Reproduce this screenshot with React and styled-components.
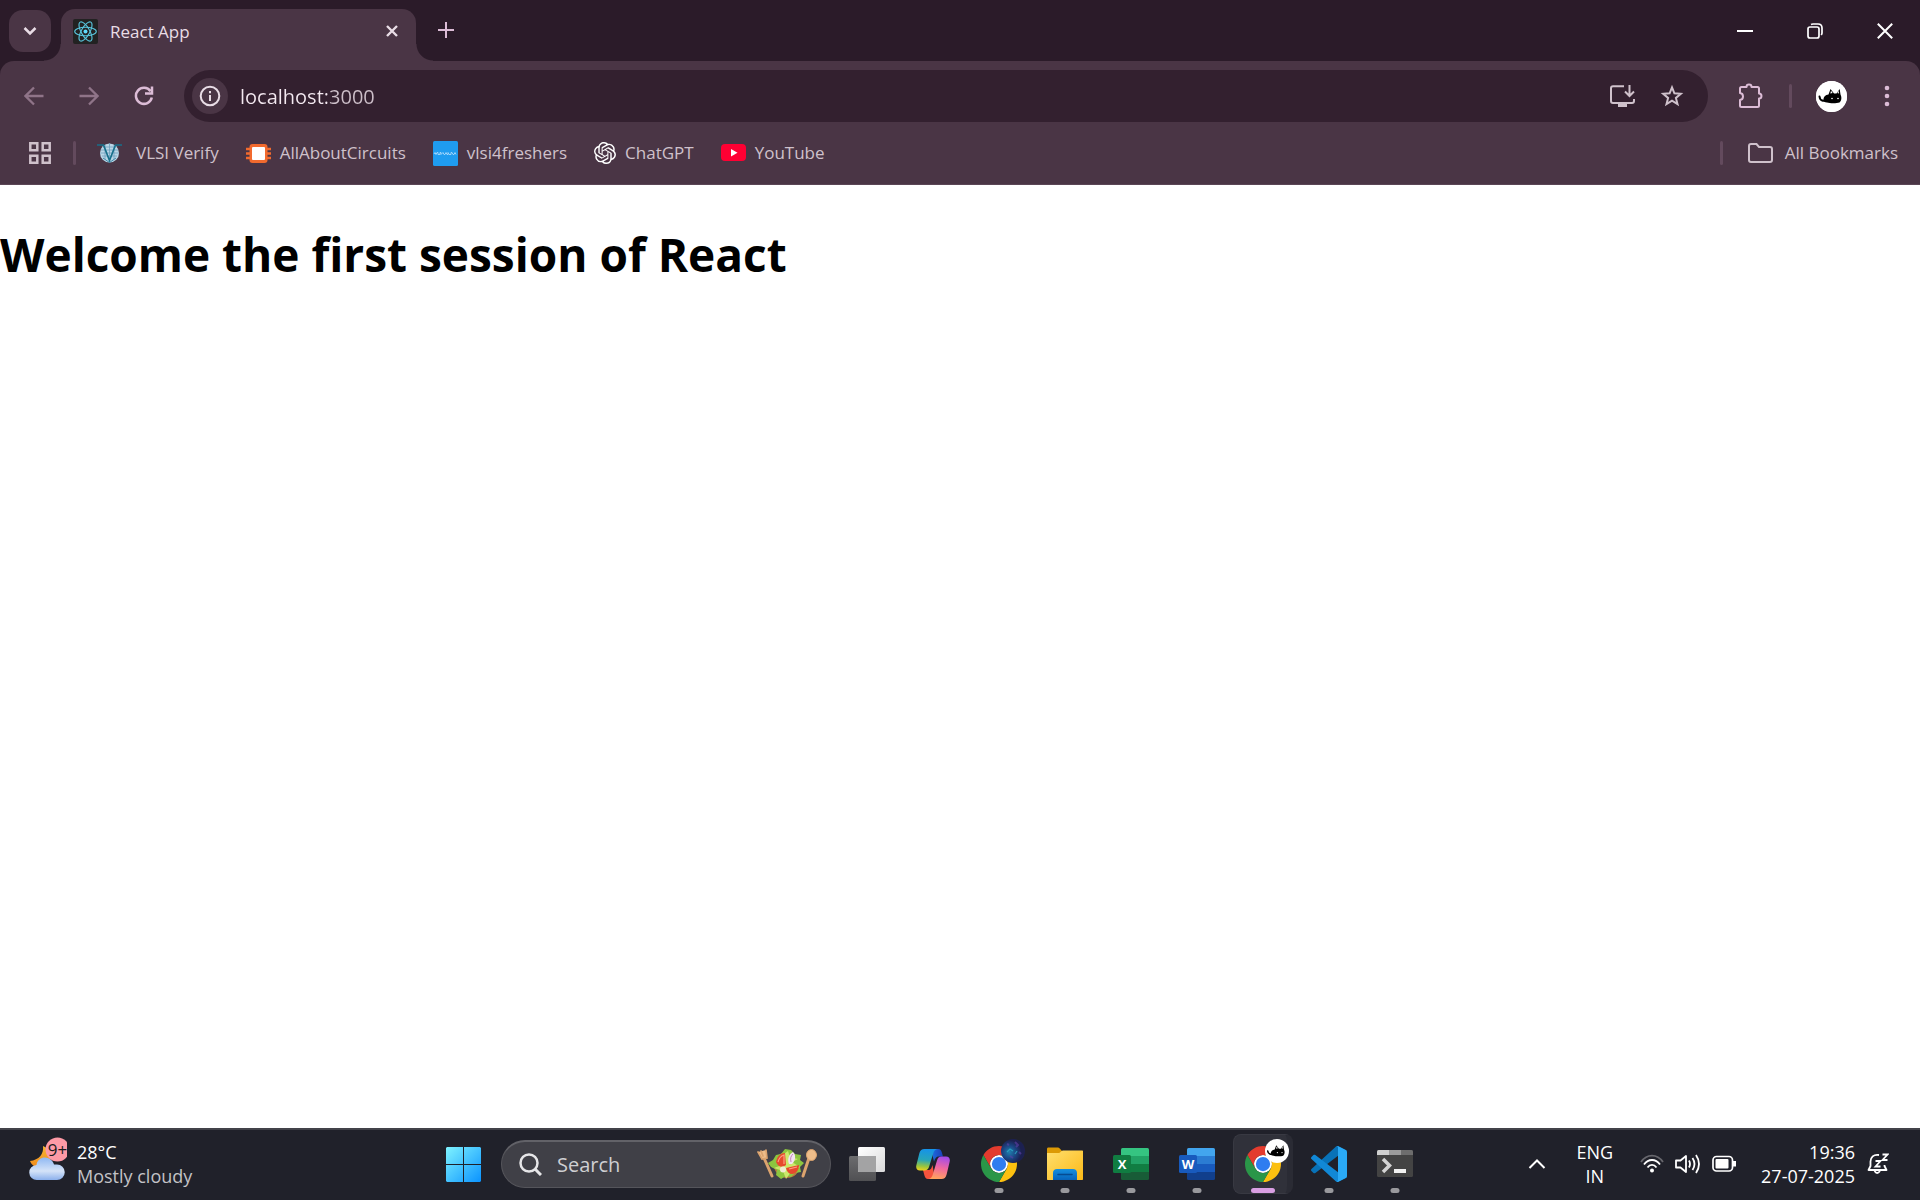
import React, { useState } from "react";
import styled, { createGlobalStyle } from "styled-components";
import { SiOpenai } from "react-icons/si";

const color = {
  strip: "#2b1b29",
  toolbar: "#4a3545",
  field: "#33202f",
  accent: "#dcbcd6",
  text: "#e9dde6",
  muted: "#cfc1cb",
  divider: "#634a5d",
  taskbar: "#20212a",
};

const GlobalStyle = createGlobalStyle`
  *, *::before, *::after { box-sizing: border-box; }
  html, body, #root { height: 100%; }
  body {
    margin: 0;
    background: #fff;
    font-family: "Open Sans", "Noto Sans", sans-serif;
    overflow: hidden;
  }
  button, input { font: inherit; }
  svg { display: block; flex: none; }
`;

const Screen = styled.div`
  display: flex;
  flex-direction: column;
  height: 100%;
  min-height: 0;
`;

/* ---------- tab strip ---------- */

const TabStrip = styled.header`
  display: flex;
  align-items: flex-end;
  height: 61px;
  padding-left: 9px;
  background: ${color.strip};
`;

const PlainButton = styled.button`
  display: flex;
  align-items: center;
  justify-content: center;
  flex: none;
  padding: 0;
  border: 0;
  background: transparent;
  color: ${(p) => p.$tone || color.text};
`;

const TabSearch = styled(PlainButton)`
  width: 42px;
  height: 42px;
  margin: 0 10px 9px 0;
  border-radius: 14px;
  background: ${color.toolbar};
`;

const Tab = styled.div`
  position: relative;
  display: flex;
  align-items: center;
  width: 355px;
  height: 52px;
  padding: 0 12px 8px;
  border-radius: 14px 14px 0 0;
  background: ${color.toolbar};
  color: ${color.text};
  font-size: 17px;
  line-height: 24px;

  &::before, &::after {
    content: "";
    position: absolute;
    bottom: 0;
    width: 17px;
    height: 17px;
  }
  &::before {
    right: 100%;
    background: radial-gradient(circle at 0 0, transparent 16px, ${color.toolbar} 17px);
  }
  &::after {
    left: 100%;
    background: radial-gradient(circle at 100% 0, transparent 16px, ${color.toolbar} 17px);
  }
`;

const TabTitle = styled.span`
  flex: 1;
  margin: 2px 0 0 12px;
`;

const TabClose = styled(PlainButton)`
  width: 24px;
  height: 24px;
`;

const NewTab = styled(PlainButton)`
  width: 42px;
  height: 42px;
  margin: 0 auto 10px 9px;
`;

const WindowButton = styled(PlainButton)`
  width: 70px;
  height: 61px;
`;

/* ---------- toolbar ---------- */

const ToolbarArea = styled.div`
  background: ${color.strip};
`;

const ToolbarShell = styled.div`
  border-radius: 14px 14px 0 0;
  border-bottom: 1px solid #5b4656;
  background: ${color.toolbar};
`;

const Toolbar = styled.div`
  display: flex;
  align-items: center;
  height: 70px;
  padding: 0 18px 0 6px;
`;

const NavButton = styled(PlainButton)`
  width: 55px;
  height: 44px;
`;

const AddressBar = styled.div`
  display: flex;
  align-items: center;
  flex: 1;
  height: 52px;
  margin: 0 15px 0 13px;
  padding: 0 12px 0 8px;
  border-radius: 26px;
  background: ${color.field};
`;

const SiteInfo = styled(PlainButton)`
  width: 36px;
  height: 36px;
  border-radius: 50%;
  background: ${color.toolbar};
`;

const UrlInput = styled.input`
  flex: 1;
  min-width: 0;
  height: 36px;
  margin-left: 12px;
  padding: 0;
  border: 0;
  outline: 0;
  background: linear-gradient(90deg, #f4e9f1 87px, #cdbfc9 87px);
  background-clip: text;
  color: transparent;
  caret-color: #fff;
  font-size: 20px;
`;

const FieldButton = styled(PlainButton)`
  width: 49px;
  height: 40px;
`;

const Divider = styled.span`
  flex: none;
  width: 3px;
  height: 24px;
  border-radius: 2px;
  background: ${color.divider};
`;

const ToolbarDivider = styled(Divider)`
  margin-left: 11px;
`;

const ProfileButton = styled(PlainButton)`
  width: 31px;
  height: 31px;
  margin: 0 24px;
  border-radius: 50%;
  background: #fff;
`;

const MenuButton = styled(PlainButton)`
  width: 31px;
  height: 40px;
`;

/* ---------- bookmarks ---------- */

const BookmarksBar = styled.nav`
  display: flex;
  align-items: center;
  height: 53px;
  padding: 0 22px 9px 29px;
  color: ${color.muted};
  font-size: 17px;
  line-height: 24px;
`;

const AppsButton = styled(PlainButton)`
  width: 22px;
  height: 24px;
  margin-right: 22px;
`;

const BookmarkList = styled.ul`
  display: flex;
  align-items: center;
  gap: 27px;
  flex: 1;
  margin: 0 0 0 21px;
  padding: 0;
  list-style: none;
`;

const Bookmark = styled.a`
  display: flex;
  align-items: center;
  gap: ${(p) => p.$gap || 9}px;
  color: inherit;
  text-decoration: none;
  white-space: nowrap;
`;

const AllBookmarks = styled(PlainButton)`
  gap: 12px;
  margin-left: 25px;
`;

/* ---------- page ---------- */

const Page = styled.main`
  flex: 1;
  min-height: 0;
  background: #fff;
`;

const Heading = styled.h1`
  margin: 36px 0;
  color: #000;
  font-size: 46px;
  font-weight: 700;
  line-height: 66px;
`;

/* ---------- taskbar ---------- */

const Taskbar = styled.footer`
  display: grid;
  grid-template-columns: minmax(0, 430fr) auto minmax(0, 492fr);
  align-items: stretch;
  height: 72px;
  padding-bottom: 2px;
  border-top: 2px solid #43434a;
  background: ${color.taskbar};
  color: #fff;
  font-size: 18px;
  line-height: 24px;
`;

const Weather = styled(PlainButton)`
  justify-content: flex-start;
  gap: 10px;
  padding-left: 28px;
  text-align: left;
`;

const Stack = styled.span`
  display: flex;
  flex-direction: column;
  align-items: ${(p) => p.$align || "flex-start"};
  white-space: nowrap;
`;

const Soft = styled.span`
  color: #c3c3c7;
`;

const Apps = styled.div`
  display: flex;
  align-items: center;
`;

const AppButton = styled(PlainButton)`
  position: relative;
  width: 66px;
  height: 68px;

  &::after {
    content: "";
    position: absolute;
    bottom: 5px;
    left: 50%;
    width: ${(p) => (p.$active ? 24 : 9)}px;
    height: 5px;
    border-radius: 3px;
    background: ${(p) => (p.$active ? "#d99fe3" : "#99999d")};
    transform: translateX(-50%);
    display: ${(p) => (p.$open ? "block" : "none")};
  }
`;

const ActivePlate = styled.span`
  display: flex;
  align-items: center;
  justify-content: center;
  width: 60px;
  height: 60px;
  padding-left: 5px;
  border: 1px solid #383942;
  border-right: 6px solid #2a2b34;
  border-radius: 8px;
  background: #30313a;
`;

const AppIcon = styled.span`
  position: relative;
  display: flex;
`;

const ProfileBadge = styled.span`
  position: absolute;
  top: -7px;
  right: -8px;
`;

const SearchBox = styled.label`
  display: flex;
  align-items: center;
  width: 330px;
  height: 48px;
  margin: 0 3px 0 5px;
  padding: 0 12px 0 17px;
  border: 1px solid #55555b;
  border-top: 2px solid #626268;
  border-radius: 24px;
  background: #404047;
`;

const SearchInput = styled.input`
  flex: 1;
  min-width: 0;
  margin-left: 15px;
  padding: 0;
  border: 0;
  outline: 0;
  background: transparent;
  color: #fff;
  font-size: 20px;
  line-height: 28px;
  &::placeholder { color: #cfcfd2; opacity: 1; }
`;

const Tray = styled.div`
  display: flex;
  align-items: center;
  justify-content: flex-end;
  padding-right: 31px;
`;

const TrayButton = styled(PlainButton)`
  height: 68px;
  gap: 11px;
  margin-left: ${(p) => p.$gap || 0}px;
`;

/* ---------- drawings ---------- */

const Line = ({ w = 24, h = w, sw = 2, children, ...rest }) => (
  <svg width={w} height={h} viewBox={`0 0 ${w} ${h}`} fill="none" stroke="currentColor" strokeWidth={sw} aria-hidden="true" {...rest}>
    {children}
  </svg>
);

const ReactFavicon = () => (
  <svg width="25" height="25" viewBox="0 0 25 25" aria-hidden="true">
    <rect width="25" height="25" rx="2" fill="#222" />
    <g fill="none" stroke="#58c4dc" strokeWidth="1.1">
      <ellipse cx="12.5" cy="12.5" rx="10.8" ry="4.2" />
      <ellipse cx="12.5" cy="12.5" rx="10.8" ry="4.2" transform="rotate(60 12.5 12.5)" />
      <ellipse cx="12.5" cy="12.5" rx="10.8" ry="4.2" transform="rotate(120 12.5 12.5)" />
    </g>
    <circle cx="12.5" cy="12.5" r="2" fill="#61dafb" />
  </svg>
);

const Cat = ({ size = 31 }) => (
  <svg width={size} height={size} viewBox="0 0 31 31" aria-hidden="true">
    <circle cx="15.5" cy="15.5" r="15.5" fill="#fff" />
    <path d="M3.500 15.500c.5 4.500 4 5 8 3" fill="none" stroke="#000" strokeWidth="2" strokeLinecap="round" />
    <path d="M7.500 19c0-3.500 2-5 5-5.500l2-5.500 3.500 4.500h2.500L23.700 8l.8 5.500c1.500 3 1 6.500-1 8-3 1-9.500 1-12.500 0C8.500 21.500 7.500 20.500 7.500 19z" fill="#000" />
    <path d="M14.300 12.500l.7-2.700 1.700 2.200zM22.900 12.500l-.1-2.700-1.500 2.200z" fill="#fff" />
    <circle cx="16" cy="17.500" r=".8" fill="#fff" />
    <circle cx="22" cy="17.500" r=".8" fill="#fff" />
  </svg>
);

const VlsiVerifyIcon = () => (
  <svg width="25" height="22" viewBox="0 0 25 22" aria-hidden="true">
    <circle cx="12.500" cy="11" r="9.500" fill="#b9d6e6" />
    <path d="M6 5h13M4 8h17M3.500 11h18M5 14h15M8 3v14M12.500 1v16M17 3v14" stroke="#6f9fbd" strokeWidth=".8" />
    <path d="M0 3h6.500l6 15.500L18.500 3H25" fill="none" stroke="#176f8b" strokeWidth="1.700" />
    <path d="M6 16l6.500 4.500L19 16" fill="none" stroke="#3f86a6" strokeWidth="1" />
  </svg>
);

const CircuitsIcon = () => (
  <svg width="25" height="19" viewBox="0 0 25 19" aria-hidden="true">
    <path d="M0 5h25M0 9.500h25M0 14h25" stroke="#f26a2e" strokeWidth="2.500" />
    <rect x="3.500" width="18" height="19" rx="3" fill="#f26a2e" />
    <rect x="6" y="3" width="13" height="13" rx="1" fill="#fff" />
  </svg>
);

const FreshersIcon = () => (
  <svg width="25" height="25" viewBox="0 0 25 25" aria-hidden="true">
    <rect width="25" height="25" rx="1.500" fill="#1f9cf0" />
    <path d="M1 13l1-1.500 1 2 1-2h1v2h2v-2h1v2l2-2 1 2h1l1-2 1 2h1v-2l1 2h2v-2h1l1 2h1l1-2 1 2" fill="none" stroke="#a8d8fa" strokeWidth=".9" />
  </svg>
);

const YouTubeIcon = () => (
  <svg width="25" height="18" viewBox="0 0 25 18" aria-hidden="true">
    <rect width="25" height="17" rx="4" fill="#ff0033" />
    <path d="M10 5v7.500l6.500-3.700z" fill="#fff" />
  </svg>
);

const WeatherIcon = () => (
  <svg width="39" height="54" viewBox="0 0 39 54" aria-hidden="true">
    <defs>
      <linearGradient id="moon" x1="0" y1="0" x2="0" y2="1">
        <stop offset="0" stopColor="#f7b731" />
        <stop offset="1" stopColor="#f08a1c" />
      </linearGradient>
      <linearGradient id="cloud" x1="0" y1="0" x2="0" y2="1">
        <stop offset="0" stopColor="#8fb8f2" />
        <stop offset=".6" stopColor="#d5e3f8" />
        <stop offset="1" stopColor="#8bb0ec" />
      </linearGradient>
    </defs>
    <path d="M15 9c1 8-4 14-13 15 3 8 14 9 19 2 4-6 1-14-6-17z" fill="url(#moon)" />
    <path d="M9 43a7.500 7.500 0 0 1-.5-15C9 23 13 20.500 17 20.500s8 3 9 7h3a7.700 7.700 0 0 1 0 15.500z" fill="url(#cloud)" />
    <circle cx="29.500" cy="12.500" r="12" fill="#fd9aa6" />
    <text x="29.500" y="18.500" textAnchor="middle" fontSize="17" fill="#1b1b1b" fontFamily="Open Sans, sans-serif">9+</text>
  </svg>
);

const StartIcon = () => (
  <svg width="35" height="35" viewBox="0 0 35 35" aria-hidden="true">
    <defs>
      <linearGradient id="start" x1="0" y1="0" x2="35" y2="35" gradientUnits="userSpaceOnUse">
        <stop offset="0" stopColor="#7ff3ff" />
        <stop offset="1" stopColor="#0a93ff" />
      </linearGradient>
    </defs>
    <path d="M1 0h16v17H0V1zM18 0h16l1 1v16H18zM0 18h17v17H1l-1-1zM18 18h17v16l-1 1H18z" fill="url(#start)" />
  </svg>
);

const SaladIcon = () => (
  <svg width="62" height="34" viewBox="0 0 62 34" aria-hidden="true">
    <g stroke="#dba36e" strokeLinecap="round" fill="#eebd8a">
      <path d="M8 10l8 18" strokeWidth="3" />
      <path d="M53 10l-6 18" strokeWidth="3" />
      <path d="M2 4l4 7 5-1-1-8M5 3l2 5" strokeWidth="1.700" />
      <ellipse cx="55.500" cy="7" rx="5" ry="5.500" strokeWidth="1" />
    </g>
    <circle cx="31" cy="17" r="13" fill="#b9763f" />
    <path d="M20 7l5-1 4-5 6 1 4 4 6 1-1 5 4 3-4 4 1 5-6 1-4 4-5-1-5 3-5-4 1-5-6-3-3-4 5-3z" fill="#8dc63f" />
    <path d="M25 8l7-5 2 6 8 2-6 3 8 5-9 5-5 7-3-8-9-3 8-3z" fill="#cbe86b" />
    <path d="M20 14c1-6 5-9 9-9l1 12c-4 3-8 2-10-3z" fill="#e6492d" />
    <path d="M30 20l13-3c0 5-3 9-7 9-3 0-5-2-6-6z" fill="#e6492d" />
    <path d="M22 14c1-4 3-6 6-7v9M33 21l8-2" fill="none" stroke="#ff9d7f" strokeWidth="1.200" />
    <path d="M33 16c-2-5 0-10 4-12 3 3 3 8-1 12z" fill="#f3e4f1" />
    <path d="M35 14c-1-4 0-6 2-8" fill="none" stroke="#b56aa8" strokeWidth=".8" />
    <circle cx="27" cy="21.500" r="3" fill="#f2ead2" />
  </svg>
);

const TaskViewIcon = () => (
  <svg width="36" height="34" viewBox="0 0 36 34" aria-hidden="true">
    <defs>
      <linearGradient id="tvFront" x1="0" y1="0" x2="1" y2="1">
        <stop offset="0" stopColor="#fff" />
        <stop offset="1" stopColor="#d9d9da" />
      </linearGradient>
      <linearGradient id="tvBack" x1="0" y1="0" x2="0" y2="1">
        <stop offset="0" stopColor="#6c6c6e" />
        <stop offset="1" stopColor="#505053" />
      </linearGradient>
    </defs>
    <rect x="0" y="9" width="27" height="25" rx="1.500" fill="url(#tvBack)" />
    <rect x="9" y="0" width="27" height="25" rx="1.500" fill="url(#tvFront)" />
    <path d="M9 9h18v16H10.500A1.500 1.500 0 0 1 9 23.500z" fill="#a3a3a4" />
  </svg>
);

const CopilotIcon = () => (
  <svg width="34" height="32" viewBox="0 0 34 32" aria-hidden="true">
    <defs>
      <linearGradient id="cpA" x1=".3" y1="0" x2=".2" y2="1">
        <stop offset="0" stopColor="#1693e8" />
        <stop offset=".5" stopColor="#28a6b8" />
        <stop offset=".8" stopColor="#9bc53d" />
        <stop offset="1" stopColor="#f2d21c" />
      </linearGradient>
      <linearGradient id="cpB" x1=".6" y1="0" x2=".4" y2="1">
        <stop offset="0" stopColor="#a44be8" />
        <stop offset=".5" stopColor="#f0689f" />
        <stop offset="1" stopColor="#ffa45c" />
      </linearGradient>
      <linearGradient id="cpC" x1="0" y1="0" x2="1" y2="0">
        <stop offset="0" stopColor="#1b6fe0" />
        <stop offset="1" stopColor="#1d3fb8" />
      </linearGradient>
    </defs>
    <path d="M15 1h7c2.500 0 3.300 1.500 4 4l1 3.500h-4c-3 0-4 2-5 5z" fill="url(#cpC)" />
    <path d="M19 31h-7c-2 0-3-1.500-3.700-4L7 22h5c3 0 3.500-2 4.500-5z" fill="#f5533d" />
    <path d="M8.500 1h13c-2.500.3-3.500 2-4.300 4.500L13 19c-.8 2.300-2 3.500-4.500 3.500H4C.8 22.500-.4 20 .4 17l3-12C4.200 2.300 5.700 1 8.500 1z" fill="url(#cpA)" />
    <path d="M25.500 31h-13c2.500-.3 3.500-2 4.300-4.500L21 12.500c.8-2.500 2-4 4.500-4H30c3.200 0 4.400 2.500 3.600 5.500l-3 12.500c-.8 3-2.300 4.500-5.100 4.500z" fill="url(#cpB)" />
  </svg>
);

const ChromeIcon = () => (
  <svg width="36" height="36" viewBox="0 0 48 48" aria-hidden="true">
    <circle cx="24" cy="24" r="12" fill="#fff" />
    <path d="M24 12H44.780a24 24 0 0 0-41.560 0L13.610 30A12 12 0 0 1 24 12Z" fill="#e33b2e" />
    <path d="M34.390 30 24 48A24 24 0 0 0 44.780 12H24A12 12 0 0 1 34.390 30Z" fill="#fcc010" />
    <path d="M13.610 30 3.220 12A24 24 0 0 0 24 48L34.390 30A12 12 0 0 1 13.610 30Z" fill="#2a9648" />
    <circle cx="24" cy="24" r="9.500" fill="#2f7df0" />
  </svg>
);

const GalaxyBadge = () => (
  <svg width="24" height="24" viewBox="0 0 24 24" aria-hidden="true">
    <defs>
      <radialGradient id="galaxy" cx=".35" cy=".55">
        <stop offset="0" stopColor="#1f7fae" />
        <stop offset=".55" stopColor="#1b4583" />
        <stop offset="1" stopColor="#1c2050" />
      </radialGradient>
    </defs>
    <circle cx="12" cy="12" r="12" fill="url(#galaxy)" />
    <path d="M14 3l3 3-2 2M18 13l2 2M6 5l2 1M9 17l3 2" stroke="#5f3fa8" strokeWidth="2" fill="none" opacity=".6" />
    <path d="M6 13l3-3 3 2M14 15l2-3" stroke="#2fb0cc" strokeWidth="1.300" fill="none" opacity=".7" />
  </svg>
);

const ExplorerIcon = () => (
  <svg width="36" height="34" viewBox="0 0 36 34" aria-hidden="true">
    <defs>
      <linearGradient id="folder" x1="0" y1="0" x2="1" y2="1">
        <stop offset="0" stopColor="#ffdf6e" />
        <stop offset="1" stopColor="#fbb917" />
      </linearGradient>
      <linearGradient id="tray" x1="0" y1="0" x2="0" y2="1">
        <stop offset="0" stopColor="#158fe0" />
        <stop offset="1" stopColor="#0763ba" />
      </linearGradient>
    </defs>
    <path d="M0 2c0-1 .6-1.500 1.500-1.500h9c1 0 1.500.3 2.200 1L15 4v6H0z" fill="#dc9a05" />
    <path d="M0 6h11c1.500 0 2-.5 3-1.500s1.500-1 2.500-1H35c.7 0 1 .4 1 1V32c0 .7-.3 1-1 1H1c-.7 0-1-.3-1-1z" fill="url(#folder)" />
    <path d="M6 33v-7c0-2.500 1.500-4 4-4h16c2.500 0 4 1.500 4 4v7z" fill="url(#tray)" />
    <path d="M11 27.500h14" stroke="#064b91" strokeWidth="1.500" strokeLinecap="round" />
  </svg>
);

const OfficeIcon = ({ letter, shades, plate }) => (
  <svg width="36" height="33" viewBox="0 0 36 33" aria-hidden="true">
    <path d="M8 1.500Q8 0 9.500 0h25Q36 0 36 1.500V8H8z" fill={shades[0]} />
    <path d="M8 8h28v8H8z" fill={shades[1]} />
    <path d="M8 16h28v8H8z" fill={shades[2]} />
    <path d="M8 24h28v6.500q0 1.500-1.500 1.500h-25Q8 32 8 30.500z" fill={shades[3]} />
    <rect y="7" width="18" height="18" rx="1.500" fill={plate} />
    <text x="9" y="20.500" textAnchor="middle" fontSize="13" fontWeight="700" fill="#fff" fontFamily="Open Sans, sans-serif">{letter}</text>
  </svg>
);

const VsCodeIcon = () => (
  <svg width="36" height="36" viewBox="0 0 100 100" aria-hidden="true">
    <path d="M96.460 10.800L75.860.880C73.470-.270 70.620.210 68.750 2.080L1.300 63.580C-.520 65.240-.510 68.090 1.300 69.750L6.810 74.750C8.300 76.100 10.530 76.200 12.130 74.990L93.360 13.370C96.090 11.300 100 13.250 100 16.670 100 14.030 98.620 11.840 96.460 10.800Z" fill="#0872b8" />
    <path d="M96.460 89.200L75.860 99.120C73.470 100.270 70.620 99.790 68.750 97.920L1.300 36.420C-.520 34.760-.510 31.910 1.300 30.250L6.810 25.250C8.300 23.900 10.530 23.800 12.130 25.010L93.360 86.630C96.090 88.700 100 86.750 100 83.330 100 85.970 98.620 88.160 96.460 89.200Z" fill="#1188d6" />
    <path d="M75.860 99.130C73.470 100.270 70.620 99.790 68.750 97.920 71.060 100.220 75 98.590 75 95.330V4.670C75 1.410 71.060-.220 68.750 2.080 70.620.210 73.470-.270 75.860.870L96.460 10.780C98.620 11.820 100 14.010 100 16.410V83.590C100 85.990 98.620 88.180 96.460 89.220Z" fill="#2aaaf6" />
  </svg>
);

const TerminalIcon = () => (
  <svg width="36" height="28" viewBox="0 0 36 28" aria-hidden="true">
    <rect width="36" height="27" rx="1.500" fill="#434343" />
    <path d="M1.500 0H12v5H0V1.500Q0 0 1.500 0z" fill="#d0d0d0" />
    <path d="M12 0h12v5H12z" fill="#9b9b9b" />
    <path d="M24 0h10.500Q36 0 36 1.500V5H24z" fill="#6d6d6d" />
    <path d="M6 9l6.500 6.500L6 22" fill="none" stroke="#d4d4d4" strokeWidth="3.500" />
    <path d="M17 21h12" stroke="#f1f1f1" strokeWidth="4" />
  </svg>
);

/* ---------- data ---------- */

const bookmarks = [
  { label: "VLSI Verify", icon: <VlsiVerifyIcon />, gap: 14 },
  { label: "AllAboutCircuits", icon: <CircuitsIcon /> },
  { label: "vlsi4freshers", icon: <FreshersIcon /> },
  { label: "ChatGPT", icon: <SiOpenai size={22} color="#fff" /> },
  { label: "YouTube", icon: <YouTubeIcon /> },
];

const apps = [
  { label: "Task view", icon: <TaskViewIcon /> },
  { label: "Copilot", icon: <CopilotIcon /> },
  { label: "Chrome, second profile", icon: <ChromeIcon />, badge: <GalaxyBadge />, open: true },
  { label: "File Explorer", icon: <ExplorerIcon />, open: true },
  { label: "Excel", icon: <OfficeIcon letter="X" shades={["#35c481", "#22a366", "#117d42", "#185c37"]} plate="#107c41" />, open: true },
  { label: "Word", icon: <OfficeIcon letter="W" shades={["#42a5ee", "#2b7cd3", "#185abd", "#113f8c"]} plate="#185abd" />, open: true },
  { label: "Chrome", icon: <ChromeIcon />, badge: <Cat size={24} />, open: true, active: true },
  { label: "Visual Studio Code", icon: <VsCodeIcon />, open: true },
  { label: "Terminal", icon: <TerminalIcon />, open: true },
];

/* ---------- parts ---------- */

const Tabs = () => (
  <TabStrip>
    <TabSearch aria-label="Search tabs">
      <Line w={14} h={10} sw={2.500}><path d="M1.500 2L7 7.500 12.500 2" /></Line>
    </TabSearch>
    <Tab>
      <ReactFavicon />
      <TabTitle>React App</TabTitle>
      <TabClose aria-label="Close tab">
        <Line w={14} sw={2.400}><path d="M2 2l10 10M12 2L2 12" /></Line>
      </TabClose>
    </Tab>
    <NewTab aria-label="New tab" $tone={color.accent}>
      <Line w={16} sw={2}><path d="M8 0v16M0 8h16" /></Line>
    </NewTab>
    <WindowButton aria-label="Minimize" $tone="#fff">
      <Line w={16} sw={2}><path d="M0 8h16" /></Line>
    </WindowButton>
    <WindowButton aria-label="Restore" $tone="#fff">
      <Line w={16} sw={1.700}>
        <rect x="1" y="4" width="11" height="11" rx="2" />
        <path d="M4 1.500Q5 1 6 1h5q4 0 4 4v5q0 1-.8 2" />
      </Line>
    </WindowButton>
    <WindowButton aria-label="Close window" $tone="#fff">
      <Line w={16} sw={2}><path d="M.8.800l14.400 14.400M15.200.800L.800 15.200" /></Line>
    </WindowButton>
  </TabStrip>
);

const Address = () => {
  const [url, setUrl] = useState("localhost:3000");
  return (
    <AddressBar>
      <SiteInfo aria-label="View site information">
        <Line w={22} sw={2}>
          <circle cx="11" cy="11" r="9.300" />
          <path d="M11 10v6M11 6v2.300" />
        </Line>
      </SiteInfo>
      <UrlInput aria-label="Address" value={url} onChange={(e) => setUrl(e.target.value)} />
      <FieldButton aria-label="Install app" $tone={color.muted}>
        <Line w={25} h={22} sw={2}>
          <path d="M14 1.200H3q-2 0-2 2V16q0 2 2 2h19q2 0 2-2v-2M19.500 0v10M15 6.500l4.500 4.500L24 6.500" />
          <path d="M8 20.500h9" strokeWidth="3" />
        </Line>
      </FieldButton>
      <FieldButton aria-label="Bookmark this tab" $tone={color.muted}>
        <Line w={24} sw={2}>
          <path d="M12 3.400l2.400 5.900 6.400.5-4.900 4.100 1.600 6.200L12 16.700l-5.500 3.400 1.600-6.200-4.900-4.100 6.400-.5z" />
        </Line>
      </FieldButton>
    </AddressBar>
  );
};

const App = () => (
  <Screen>
    <GlobalStyle />
    <Tabs />
    <ToolbarArea>
      <ToolbarShell>
        <Toolbar>
          <NavButton aria-label="Back" $tone="#8f7488">
            <Line w={20} sw={2.300}><path d="M19.500 10H2M10 1.500L1.500 10l8.500 8.500" /></Line>
          </NavButton>
          <NavButton aria-label="Forward" $tone="#8f7488">
            <Line w={20} sw={2.300}><path d="M.5 10H18M10 1.500l8.500 8.500-8.500 8.500" /></Line>
          </NavButton>
          <NavButton aria-label="Reload" $tone={color.accent}>
            <Line w={20} sw={2.500}>
              <path d="M17.800 11.500A8 8 0 1 1 16.500 5.200M18 .5v7H11" />
            </Line>
          </NavButton>
          <Address />
          <NavButton aria-label="Extensions" $tone={color.accent}>
            <Line w={26} sw={2}>
              <path d="M3.500 4h5c0-3.300 5-3.300 5 0h6q1.500 0 1.500 1.500v5c3.300 0 3.300 5 0 5v7q0 1.500-1.500 1.500h-16q-1.500 0-1.500-1.500v-5.500c4-.5 4-6.500 0-7V5.500q0-1.500 1.500-1.500z" strokeLinejoin="round" />
            </Line>
          </NavButton>
          <ToolbarDivider />
          <ProfileButton aria-label="Profile"><Cat /></ProfileButton>
          <MenuButton aria-label="Browser menu" $tone={color.accent}>
            <svg width="6" height="22" viewBox="0 0 6 22" fill="currentColor" aria-hidden="true">
              <circle cx="3" cy="3" r="2.300" /><circle cx="3" cy="11" r="2.300" /><circle cx="3" cy="19" r="2.300" />
            </svg>
          </MenuButton>
        </Toolbar>
        <BookmarksBar aria-label="Bookmarks">
          <AppsButton aria-label="Apps" $tone={color.muted}>
            <Line w={22} sw={2.500}>
              <path d="M1.300 1.300h7v7h-7zM13.700 1.300h7v7h-7zM1.300 13.700h7v7h-7zM13.700 13.700h7v7h-7z" />
            </Line>
          </AppsButton>
          <Divider />
          <BookmarkList>
            {bookmarks.map((b) => (
              <li key={b.label}>
                <Bookmark href="#" $gap={b.gap}>{b.icon}{b.label}</Bookmark>
              </li>
            ))}
          </BookmarkList>
          <Divider />
          <AllBookmarks $tone={color.muted}>
            <Line w={25} h={20} sw={2}>
              <path d="M1 3q0-2 2-2h5.500L11 4h11q2 0 2 2v11q0 2-2 2H3q-2 0-2-2z" />
            </Line>
            All Bookmarks
          </AllBookmarks>
        </BookmarksBar>
      </ToolbarShell>
    </ToolbarArea>

    <Page>
      <Heading>Welcome the first session of React</Heading>
    </Page>

    <Taskbar>
      <Weather $tone="#fff">
        <WeatherIcon />
        <Stack>
          <span>28°C</span>
          <Soft>Mostly cloudy</Soft>
        </Stack>
      </Weather>
      <Apps>
        <AppButton aria-label="Start"><StartIcon /></AppButton>
        <SearchBox>
          <Line w={23} sw={2.500} color="#e6e6e8">
            <circle cx="10" cy="10" r="8.500" />
            <path d="M16 16l6 6" strokeWidth="3" />
          </Line>
          <SearchInput type="search" placeholder="Search" aria-label="Search" />
          <SaladIcon />
        </SearchBox>
        {apps.map((a) => {
          const icon = (
            <AppIcon>
              {a.icon}
              {a.badge && <ProfileBadge>{a.badge}</ProfileBadge>}
            </AppIcon>
          );
          return (
            <AppButton key={a.label} aria-label={a.label} $open={a.open} $active={a.active}>
              {a.active ? <ActivePlate>{icon}</ActivePlate> : icon}
            </AppButton>
          );
        })}
      </Apps>
      <Tray>
        <TrayButton aria-label="Show hidden icons" $tone="#fff">
          <Line w={18} h={12} sw={2}><path d="M1.500 10L9 2.500l7.500 7.500" /></Line>
        </TrayButton>
        <TrayButton $tone="#fff" $gap={30}>
          <Stack $align="center"><span>ENG</span><span>IN</span></Stack>
        </TrayButton>
        <TrayButton aria-label="Network, volume and battery" $tone="#fff" $gap={27}>
          <Line w={24} h={20} sw={1.800}>
            <path d="M1 8C7-.500 17-.500 23 8" stroke="#67676d" />
            <path d="M4 10.500c4.500-6 11.500-6 16 0M7.500 13.500c2.500-3.500 6.500-3.500 9 0" />
            <circle cx="12" cy="16.500" r="2" fill="currentColor" stroke="none" />
          </Line>
          <Line w={26} h={22} sw={1.800}>
            <path d="M1 7.500h4.500L11 3v16l-5.500-4.500H1zM14 7.500q2 3.500 0 7M17.500 5q4 6 0 12M21 2q6 9 0 18" strokeLinejoin="round" />
          </Line>
          <Line w={25} h={18} sw={1.700}>
            <rect x="1" y="1.500" width="19.500" height="14.500" rx="3.500" />
            <rect x="3.500" y="4" width="13" height="9.500" rx="1" fill="currentColor" stroke="none" />
            <path d="M22.500 6v5.500" strokeWidth="3" />
          </Line>
        </TrayButton>
        <TrayButton $tone="#fff" $gap={24}>
          <Stack $align="flex-end"><span>19:36</span><span>27-07-2025</span></Stack>
        </TrayButton>
        <TrayButton aria-label="Notifications, do not disturb" $tone="#fff" $gap={12}>
          <Line w={22} h={24} sw={1.800}>
            <path d="M12 3C6.500 2 3.500 5.500 3.500 9.500V14L1.500 18h18l-2-4v-1" strokeLinejoin="round" />
            <path d="M7.500 19q2.500 4 5.500 0M8.500 9h5l-5 5.500h5M15.500 2.500h5l-5 5.500h5" />
          </Line>
        </TrayButton>
      </Tray>
    </Taskbar>
  </Screen>
);

export default App;
